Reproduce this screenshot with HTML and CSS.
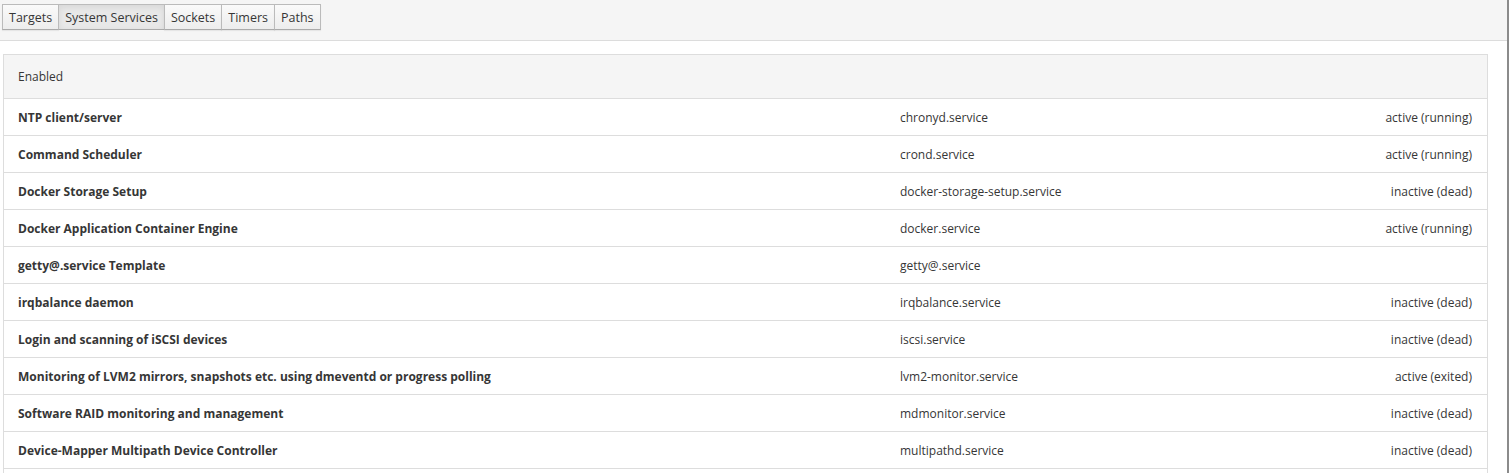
FILE: index.html
```html
<!DOCTYPE html>
<html>
<head>
<meta charset="utf-8">
<link rel="stylesheet" href="styles.css">
<title>Services</title>
</head>
<body>
<div class="frame">
  <div class="toolbar">
    <div class="btn-group">
      <button class="btn">Targets</button>
      <button class="btn active">System Services</button>
      <button class="btn">Sockets</button>
      <button class="btn">Timers</button>
      <button class="btn">Paths</button>
    </div>
  </div>
  <div class="content">
    <div class="panel">
      <div class="panel-heading">Enabled</div>
      <div class="row"><span class="name">NTP client/server</span><span class="unit">chronyd.service</span><span class="state">active (running)</span></div>
      <div class="row"><span class="name">Command Scheduler</span><span class="unit">crond.service</span><span class="state">active (running)</span></div>
      <div class="row"><span class="name">Docker Storage Setup</span><span class="unit">docker-storage-setup.service</span><span class="state">inactive (dead)</span></div>
      <div class="row"><span class="name">Docker Application Container Engine</span><span class="unit">docker.service</span><span class="state">active (running)</span></div>
      <div class="row"><span class="name">getty@.service Template</span><span class="unit">getty@.service</span><span class="state"></span></div>
      <div class="row"><span class="name">irqbalance daemon</span><span class="unit">irqbalance.service</span><span class="state">inactive (dead)</span></div>
      <div class="row"><span class="name">Login and scanning of iSCSI devices</span><span class="unit">iscsi.service</span><span class="state">inactive (dead)</span></div>
      <div class="row"><span class="name">Monitoring of LVM2 mirrors, snapshots etc. using dmeventd or progress polling</span><span class="unit">lvm2-monitor.service</span><span class="state">active (exited)</span></div>
      <div class="row"><span class="name">Software RAID monitoring and management</span><span class="unit">mdmonitor.service</span><span class="state">inactive (dead)</span></div>
      <div class="row"><span class="name">Device-Mapper Multipath Device Controller</span><span class="unit">multipathd.service</span><span class="state">inactive (dead)</span></div>
    </div>
  </div>
</div>
</body>
</html>
```
FILE: styles.css
```css
* { box-sizing: border-box; }
html, body { margin: 0; padding: 0; height: 100%; overflow: hidden; background: #fff; }
body {
  font-family: "Open Sans", "Liberation Sans", sans-serif;
  font-size: 12px;
  color: #363636;
}
.frame {
  width: 1509px;
  height: 473px;
  border-right: 2px solid #8b8b8b;
  overflow: hidden;
}
.toolbar {
  height: 41px;
  background: #f5f5f5;
  border-bottom: 1px solid #dcdcdc;
  padding: 4px 0 0 2px;
}
.btn-group { display: flex; }
.btn {
  font-family: inherit;
  font-size: 12.5px;
  color: #363636;
  height: 26px;
  padding: 1px 6px 0;
  margin: 0 -1px 0 0;
  background: linear-gradient(#fafafa, #ededed);
  border: 1px solid #bbb;
  border-bottom-color: #aaa;
  border-radius: 0;
  box-shadow: 0 1px 1px rgba(0,0,0,0.06);
  line-height: 23px;
}
.btn.active {
  background: #e8e8e8;
  box-shadow: inset 0 2px 6px rgba(0,0,0,0.08);
}
.content { padding: 13px 0 0 3px; }
.panel {
  width: 1485px;
  min-height: 440px;
  border: 1px solid #dddddd;
  border-bottom: none;
}
.panel-heading {
  height: 44px;
  background: #f5f5f5;
  border-bottom: 1px solid #dddddd;
  padding: 0 14px;
  display: flex;
  align-items: center;
  color: #363636;
}
.row {
  height: 37px;
  border-bottom: 1px solid #dddddd;
  display: grid;
  grid-template-columns: 882px 1fr auto;
  align-items: center;
  padding: 0 15px 0 14px;
}
.name { font-weight: 700; color: #363636; }
.unit { color: #363636; }
.state { text-align: right; color: #363636; }
```
